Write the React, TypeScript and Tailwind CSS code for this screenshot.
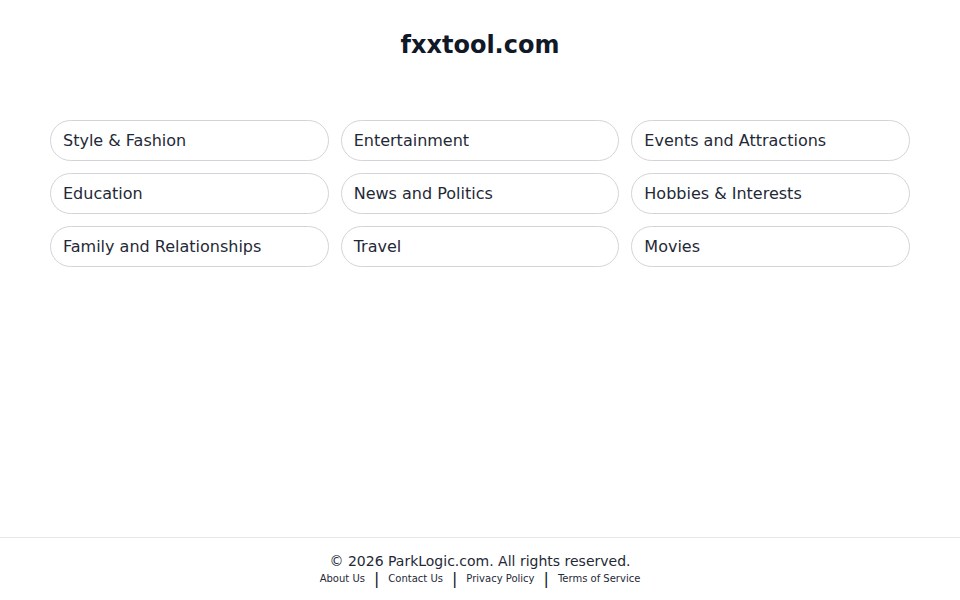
const categories = [
  'Style & Fashion',
  'Entertainment',
  'Events and Attractions',
  'Education',
  'News and Politics',
  'Hobbies & Interests',
  'Family and Relationships',
  'Travel',
  'Movies',
]

const links = ['About Us', 'Contact Us', 'Privacy Policy', 'Terms of Service']

export default function App() {
  return (
    <div className="min-h-screen flex flex-col bg-white text-[#1f2937] font-['DejaVu_Sans',sans-serif]">
      <main className="flex-1 px-[50px]">
        <h1 className="pt-[29px] text-center text-[24px] leading-[32px] font-bold text-[#111827]">fxxtool.com</h1>
        <div className="mt-[59px] grid grid-cols-3 gap-x-[12px] gap-y-[12px]">
          {categories.map((c) => (
            <a
              key={c}
              href="#"
              className="h-[41px] flex items-center px-[12px] rounded-full border border-[#d4d4d8] text-[16px] text-[#1f2937] bg-white"
            >
              {c}
            </a>
          ))}
        </div>
      </main>
      <footer className="border-t border-[#e5e7eb] pt-[13px] pb-[13px] text-center">
        <p className="text-[14px] leading-[20px] text-[#1f2937]">© 2026 ParkLogic.com. All rights reserved.</p>
        <div className="flex justify-center items-center text-[10px] leading-[16px] text-[#1f2937]">
          {links.map((l, i) => (
            <span key={l} className="flex items-center">
              {i > 0 && <span className="mx-[9px] text-[16px] leading-[16px] text-[#111827]">|</span>}
              <a href="#" className="text-[#1f2937]">{l}</a>
            </span>
          ))}
        </div>
      </footer>
    </div>
  )
}
